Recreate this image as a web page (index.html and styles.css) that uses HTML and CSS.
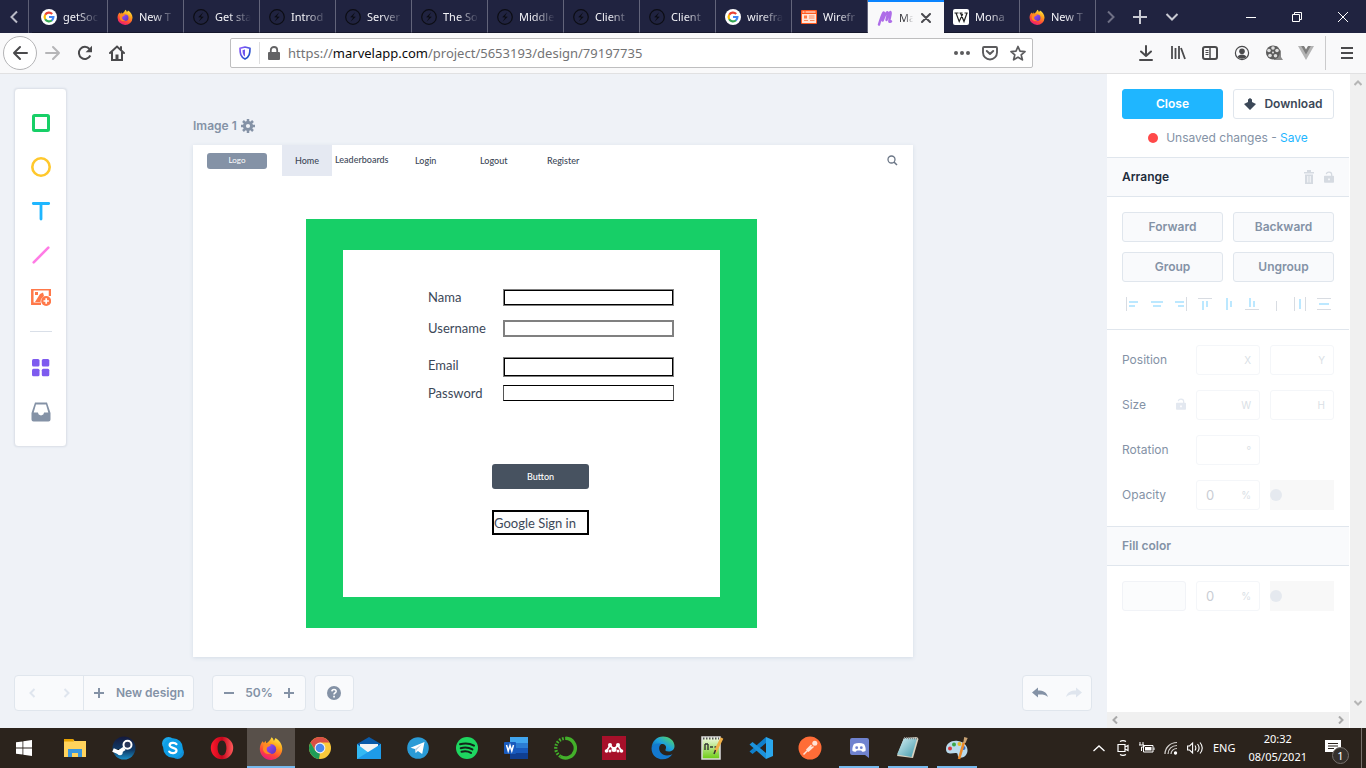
FILE: index.html
```html
<!DOCTYPE html>
<html lang="en">
<head>
<meta charset="utf-8">
<title>Marvel design editor</title>
<link rel="stylesheet" href="styles.css">
</head>
<body>
<svg class="sprite" aria-hidden="true">
  <defs>
    <linearGradient id="ff-body" x1="0.8" y1="0" x2="0.3" y2="1"><stop offset="0" stop-color="#fff04a"/><stop offset=".35" stop-color="#ffa31a"/><stop offset=".7" stop-color="#ff4a36"/><stop offset="1" stop-color="#e8177e"/></linearGradient>
    <linearGradient id="ff-core" x1="0" y1="0" x2="1" y2="1"><stop offset="0" stop-color="#9a4cff"/><stop offset="1" stop-color="#5a35b8"/></linearGradient>
    <linearGradient id="shield" x1="0" y1="0" x2="1" y2="1"><stop offset="0" stop-color="#9059ff"/><stop offset="1" stop-color="#0250bb"/></linearGradient>
    <linearGradient id="steam" x1="0" y1="0" x2="0" y2="1"><stop offset="0" stop-color="#14193d"/><stop offset=".6" stop-color="#103c68"/><stop offset="1" stop-color="#1a8fc8"/></linearGradient>
    <linearGradient id="opera" x1="0" y1="0" x2="1" y2="0"><stop offset="0" stop-color="#ff1b2d"/><stop offset=".5" stop-color="#c4051b"/><stop offset="1" stop-color="#ff5a5a"/></linearGradient>
    <linearGradient id="edge" x1="0" y1="1" x2="1" y2="0"><stop offset="0" stop-color="#0c59a4"/><stop offset=".5" stop-color="#1ba0df"/><stop offset="1" stop-color="#5fe04e"/></linearGradient>
    <linearGradient id="npp" x1="0" y1="0" x2="0" y2="1"><stop offset="0" stop-color="#f6fbe9"/><stop offset="1" stop-color="#6ccb12"/></linearGradient>
    <linearGradient id="note" x1="0" y1="0" x2="1" y2="1"><stop offset="0" stop-color="#d8f2f6"/><stop offset="1" stop-color="#3e97a8"/></linearGradient>
  </defs>
  <symbol id="i-google" viewBox="0 0 16 16"><circle cx="8" cy="8" r="8" fill="#fff"/><g fill="none" stroke-width="2.2"><path d="M4.2 5.8A4.4 4.4 0 0 1 11.2 5" stroke="#ea4335"/><path d="M4.2 10.2a4.5 4.5 0 0 1 0-4.4" stroke="#fbbc05"/><path d="M11 11.2A4.4 4.4 0 0 1 4.2 10.2" stroke="#34a853"/><path d="M8 8h4.4a4.4 4.4 0 0 1-1.5 3.3" stroke="#4285f4"/></g></symbol>
  <symbol id="i-firefox" viewBox="0 0 24 24"><path d="M12.5 1.2c1.5 1 2.1 2.2 2.4 3.7l1.6-2.8c3.8 2.4 6.8 6 6.8 11A11.2 11.2 0 0 1 12 24 11.2 11.2 0 0 1 .8 13C.8 9.800 2 7.400 3.500 5.200L5 7l1.500-2.200.8 2.500C9.500 6 11.500 4 12.500 1.200z" fill="url(#ff-body)"/><circle cx="12.300" cy="13.200" r="4.900" fill="url(#ff-core)"/><path d="M4.500 8.500c2.500-1.400 5-1 7.500.5-1.200 1.800-3.200 1-4.300 3.300-.6 2.700 1.800 5 4.800 4.800-3 2.200-7.600.6-8.600-3.300z" fill="#ff8a22"/></symbol>
  <symbol id="i-bolt" viewBox="0 0 16 16"><circle cx="8" cy="8" r="7.300" fill="none" stroke="#0c0d14" stroke-width="1.200"/><path d="M10.200 3.200 5.200 8.200l3 .3-2.700 4.300 5.300-5.100-3-.3z" fill="#0c0d14"/></symbol>
  <symbol id="i-wire" viewBox="0 0 16 16"><rect y="1" width="16" height="14" rx="1" fill="#ff5a1f"/><path d="M1 5h14v9H1z" fill="#ffe5d9"/><path d="M1.500 3h2m1 0h10" stroke="#fff"/><path d="M3 6.500h3v3H3z" fill="#ff7a45"/><path d="M8 7h5.500M8 9h5.500M3 11.500h4M9 11.500h4.500" stroke="#ff8a5c"/></symbol>
  <symbol id="i-marvel" viewBox="0 0 16 16"><path d="M2 14.500C3.500 10 5 4 6.500 2.500c1.300-.7.200 5-.8 8C7.500 6 9 2.500 10.300 2.200c1.300.3-.3 5-.8 7.800C11 6 12 2.500 13.500 2c1.200.6-1.400 7-1.200 9.500.2.800 1.200.3 1.700-.2" fill="none" stroke="#ae6de8" stroke-width="2.400" stroke-linecap="round" stroke-linejoin="round"/></symbol>
  <symbol id="i-wiki" viewBox="0 0 16 16"><rect width="16" height="16" rx="2" fill="#fff"/><path d="M1.500 4h4m1 0h3m2 0h3.200M3 4l3.200 8.500L9.700 5M7.500 4l3.500 8.500L14 4" fill="none" stroke="#222" stroke-width="1.200"/></symbol>
  <symbol id="i-unlock" viewBox="0 0 12 14"><path d="M1 5.500h10a1 1 0 0 1 1 1V13a1 1 0 0 1-1 1H1a1 1 0 0 1-1-1V6.500a1 1 0 0 1 1-1zm4 3.300v2h2v-2z" fill="currentColor" fill-rule="evenodd"/><path d="M2.800 3.500C3.300.2 9.200.2 9.200 4v2" fill="none" stroke="currentColor" stroke-width="1.500"/></symbol>
</svg>

<header class="tabs">
  <button class="tab-arrow" aria-label="Scroll tabs left"><svg width="8" height="14" viewBox="0 0 8 14"><path d="M7 1.500 1.500 7 7 12.500" fill="none" stroke="#b9bac6" stroke-width="2"/></svg></button>
  <nav class="tab-list">
    <a href="#" class="tab"><svg class="fav"><use href="#i-google"/></svg><span>getSoc</span></a>
    <a href="#" class="tab"><svg class="fav"><use href="#i-firefox"/></svg><span>New T</span></a>
    <a href="#" class="tab"><svg class="fav"><use href="#i-bolt"/></svg><span>Get sta</span></a>
    <a href="#" class="tab"><svg class="fav"><use href="#i-bolt"/></svg><span>Introd</span></a>
    <a href="#" class="tab"><svg class="fav"><use href="#i-bolt"/></svg><span>Server</span></a>
    <a href="#" class="tab"><svg class="fav"><use href="#i-bolt"/></svg><span>The So</span></a>
    <a href="#" class="tab"><svg class="fav"><use href="#i-bolt"/></svg><span>Middle</span></a>
    <a href="#" class="tab"><svg class="fav"><use href="#i-bolt"/></svg><span>Client</span></a>
    <a href="#" class="tab"><svg class="fav"><use href="#i-bolt"/></svg><span>Client</span></a>
    <a href="#" class="tab"><svg class="fav"><use href="#i-google"/></svg><span>wirefra</span></a>
    <a href="#" class="tab"><svg class="fav"><use href="#i-wire"/></svg><span>Wirefr</span></a>
    <a href="#" class="tab active"><svg class="fav"><use href="#i-marvel"/></svg><span>Ma</span><svg width="10" height="10" viewBox="0 0 10 10"><path d="m1 1 8 8m0-8L1 9" stroke="#4a4a4f" stroke-width="2" stroke-linecap="round"/></svg></a>
    <a href="#" class="tab"><svg class="fav"><use href="#i-wiki"/></svg><span>Mona</span></a>
    <a href="#" class="tab"><svg class="fav"><use href="#i-firefox"/></svg><span>New T</span></a>
  </nav>
  <div class="tab-tools">
    <button aria-label="Scroll tabs right"><svg width="8" height="14" viewBox="0 0 8 14"><path d="M1 1.500 6.500 7 1 12.500" fill="none" stroke="#6f7085" stroke-width="2"/></svg></button>
    <button aria-label="New tab"><svg width="14" height="14" viewBox="0 0 14 14"><path d="M7 0v14M0 7h14" stroke="#c9cad3" stroke-width="2"/></svg></button>
    <button aria-label="List tabs"><svg width="14" height="8" viewBox="0 0 14 8"><path d="m1.500 1 5.500 5.500L12.500 1" fill="none" stroke="#c9cad3" stroke-width="2"/></svg></button>
  </div>
  <div class="window-tools">
    <button aria-label="Minimize"><svg width="10" height="10" viewBox="0 0 10 10"><path d="M0 5.500h10" stroke="#fff"/></svg></button>
    <button aria-label="Restore"><svg width="10" height="10" viewBox="0 0 10 10"><path d="M.5 2.500h7v7h-7zM2.500 2.500v-2h7v7h-2" fill="none" stroke="#fff"/></svg></button>
    <button aria-label="Close window"><svg width="10" height="10" viewBox="0 0 10 10"><path d="m0 0 10 10m0-10L0 10" stroke="#fff"/></svg></button>
  </div>
</header>

<div class="toolbar">
  <button class="back" aria-label="Back"><svg width="16" height="16" viewBox="0 0 16 16"><path d="M15 8H2m6-6L2 8l6 6" fill="none" stroke="#4a4a4c" stroke-width="2" stroke-linecap="round" stroke-linejoin="round"/></svg></button>
  <button aria-label="Forward"><svg width="16" height="16" viewBox="0 0 16 16"><path d="M1 8h13M8 2l6 6-6 6" fill="none" stroke="#b5b5b7" stroke-width="2" stroke-linecap="round" stroke-linejoin="round"/></svg></button>
  <button aria-label="Reload"><svg width="16" height="16" viewBox="0 0 16 16"><path d="M13.300 10.500A6 6 0 1 1 12.500 4" fill="none" stroke="#4a4a4c" stroke-width="2"/><path d="M15 .8v6.400H8.600z" fill="#4a4a4c"/></svg></button>
  <button aria-label="Home"><svg width="16" height="16" viewBox="0 0 16 16"><path d="m1 8 7-6.500L15 8M3 7v8h10V7M12 2v3" fill="none" stroke="#4a4a4c" stroke-width="2" stroke-linecap="round"/><path d="M6.500 15V9.500h3V15z" fill="#4a4a4c"/></svg></button>
  <span class="stretch"></span>
  <div class="url">
    <svg width="12" height="14" viewBox="0 0 12 14"><path d="M6 1 11 2.300c0 5-.5 8.500-5 10.700C1.500 10.800 1 7.300 1 2.300z" fill="none" stroke="url(#shield)" stroke-width="1.700" stroke-linejoin="round"/><path d="M6 3.500v7C4 9.200 3.500 7 3.500 4.200z" fill="#6f56ee"/></svg>
    <span class="url-rule"></span>
    <svg width="12" height="14" viewBox="0 0 12 14"><rect y="6" width="12" height="8" rx="1" fill="#636365"/><path d="M2.800 7V4c0-4 6.400-4 6.400 0v3" fill="none" stroke="#636365" stroke-width="1.800"/></svg>
    <a class="address" href="#">https://<b>marvelapp.com</b>/project/5653193/design/79197735</a>
    <button aria-label="Page actions"><svg width="16" height="16" viewBox="0 0 16 16"><g fill="#5b5b5d"><circle cx="2" cy="8" r="2"/><circle cx="8" cy="8" r="2"/><circle cx="14" cy="8" r="2"/></g></svg></button>
    <button aria-label="Save to Pocket"><svg width="16" height="16" viewBox="0 0 16 16"><path d="M2 2h12a1 1 0 0 1 1 1v4.500a7 7 0 0 1-14 0V3a1 1 0 0 1 1-1z" fill="none" stroke="#5b5b5d" stroke-width="1.900"/><path d="M4.800 6 8 9l3.200-3" fill="none" stroke="#5b5b5d" stroke-width="2" stroke-linecap="round" stroke-linejoin="round"/></svg></button>
    <button aria-label="Bookmark"><svg width="16" height="16" viewBox="0 0 16 16"><path d="m8 1.500 2 4.600 5 .5-3.800 3.300 1.200 4.900L8 12.200l-4.400 2.600 1.200-4.900L1 6.600l5-.5z" fill="none" stroke="#5b5b5d" stroke-width="1.700" stroke-linejoin="round"/></svg></button>
  </div>
  <span class="stretch"></span>
  <button aria-label="Downloads"><svg width="16" height="16" viewBox="0 0 16 16"><path d="M8 1v10M3 6.500 8 11l5-4.500M2 15h12" fill="none" stroke="#4a4a4c" stroke-width="2" stroke-linecap="round" stroke-linejoin="round"/></svg></button>
  <button aria-label="Library"><svg width="16" height="16" viewBox="0 0 16 16"><path d="M2 1v13M5.500 3v11M9 1v13M11 3l4 11" stroke="#4a4a4c" stroke-width="1.800"/></svg></button>
  <button aria-label="Sidebars"><svg width="16" height="16" viewBox="0 0 16 16"><rect x="1" y="2" width="14" height="12" rx="2" fill="none" stroke="#4a4a4c" stroke-width="2"/><path d="M8 2v12" stroke="#4a4a4c" stroke-width="1.500"/><path d="M3.500 5.500h3m-3 2h3m-3 2h3" stroke="#4a4a4c"/></svg></button>
  <button aria-label="Account"><svg width="16" height="16" viewBox="0 0 16 16"><circle cx="8" cy="8" r="6.600" fill="none" stroke="#4a4a4c" stroke-width="1.200"/><circle cx="8" cy="6.300" r="2.800" fill="#4a4a4c"/><path d="M3.600 12c.7-3.500 8.100-3.500 8.800 0-2.600 2.300-6.200 2.300-8.800 0z" fill="#4a4a4c"/></svg></button>
  <button aria-label="Video extension"><svg width="18" height="16" viewBox="0 0 18 16"><path d="M9 1h3l4 5v6l2 3H9z" fill="#8a8a8a"/><circle cx="8" cy="7.500" r="7" fill="#5c5c5c"/><g fill="#dedede"><circle cx="8" cy="3" r="1.800"/><circle cx="4" cy="5.500" r="1.800"/><circle cx="12" cy="5.500" r="1.800"/><circle cx="5" cy="10.500" r="1.800"/><circle cx="10.500" cy="10.800" r="1.800"/><circle cx="8" cy="7.500" r="1"/></g></svg></button>
  <button aria-label="Vue devtools"><svg width="16" height="14" viewBox="0 0 16 14"><path d="M0 0h5.500L8 4.500 10.500 0H16L8 14z" fill="#b4b4b4"/><path d="M3.200 0H6l2 3.500L10 0h2.800L8 8.500z" fill="#7d7d7d"/></svg></button>
  <span class="menu-rule"></span>
  <button aria-label="Menu"><svg width="12" height="14" viewBox="0 0 12 14"><path d="M0 2h12M0 7h12M0 12h12" stroke="#4a4a4c" stroke-width="2"/></svg></button>
</div>

<main class="page">
  <section class="workspace">
    <div class="stage">
      <aside class="tools">
        <button aria-label="Rectangle"><svg width="20" height="20" viewBox="0 0 20 20"><rect x="2.500" y="2.500" width="15" height="15" rx="1" fill="none" stroke="#17cf67" stroke-width="3"/></svg></button>
        <button aria-label="Ellipse"><svg width="20" height="20" viewBox="0 0 20 20"><circle cx="10" cy="10" r="8.700" fill="none" stroke="#ffc82c" stroke-width="2.600"/></svg></button>
        <button aria-label="Text"><svg width="20" height="20" viewBox="0 0 20 20"><path d="M2.300 2.500h15.400M10 3v15" stroke="#1fb6ff" stroke-width="2.800" stroke-linecap="round"/></svg></button>
        <button aria-label="Line"><svg width="20" height="20" viewBox="0 0 20 20"><path d="M2.700 17.300 17.300 2.700" stroke="#ff7ce5" stroke-width="2.600" stroke-linecap="round"/></svg></button>
        <button aria-label="Image"><svg width="20" height="20" viewBox="0 2 20 20"><path d="M19 9V2.300H1.300v14.400H10" fill="none" stroke="#ff7849" stroke-width="2.500"/><path d="M4 15 9 7l3-1.500L13 9l-3 3-.5 3zM4 5h3v3H4z" fill="#ff7849"/><circle cx="15.200" cy="14" r="5" fill="#ff7849"/><path d="M15.200 11.300v5.400M12.500 14h5.400" stroke="#fff" stroke-width="1.700"/></svg></button>
        <hr>
        <button aria-label="Components"><svg width="20" height="20" viewBox="0 0 20 20"><g fill="#7e5bef"><rect x="1" y="1" width="7.500" height="7.500" rx="1.500"/><rect x="10.800" y="1" width="7.500" height="7.500" rx="1.500"/><rect x="1" y="10.700" width="7.500" height="7.500" rx="1.500"/><rect x="10.800" y="10.700" width="7.500" height="7.500" rx="1.500"/></g></svg></button>
        <button aria-label="Library inbox"><svg width="20" height="20" viewBox="0 0 20 20"><path d="M4 .5h12l3.500 10.500v6.500a2 2 0 0 1-2 2h-15a2 2 0 0 1-2-2V11zM5 2.500 2.700 10.500h4.200l.8 2 2.300 1 2.300-1 .8-2h4.200L15 2.500z" fill="#8492a6" fill-rule="evenodd"/></svg></button>
      </aside>

      <div class="board-wrap">
        <div class="board-title">Image 1
          <svg width="14" height="14" viewBox="0 0 14 14"><circle cx="7" cy="7" r="3.600" fill="none" stroke="#8492a6" stroke-width="3"/><path d="M7 0v3m0 8v3M0 7h3m8 0h3M2 2l2.200 2.200m5.600 5.600L12 12M12 2 9.800 4.200M4.200 9.800 2 12" stroke="#8492a6" stroke-width="2.500"/></svg>
        </div>
        <div class="board">
          <span class="node logo">Logo</span>
          <span class="node home">Home</span>
          <span class="node nav n-leader">Leaderboards</span>
          <span class="node nav n-login">Login</span>
          <span class="node nav n-logout">Logout</span>
          <span class="node nav n-register">Register</span>
          <svg class="node search" width="11" height="11" viewBox="0 0 11 11"><circle cx="4.500" cy="4.500" r="3.500" fill="none" stroke="#6b7686" stroke-width="1.300"/><path d="m7 7 3 3" stroke="#6b7686" stroke-width="1.500"/></svg>
          <div class="node frame"></div>
          <label class="node label l1" for="nama">Nama</label><input class="node box b1" id="nama">
          <label class="node label l2" for="user">Username</label><input class="node box b2" id="user">
          <label class="node label l3" for="mail">Email</label><input class="node box b3" id="mail">
          <label class="node label l4" for="pass">Password</label><input class="node box b4" id="pass" type="password">
          <button class="node submit">Button</button>
          <button class="node google">Google Sign in</button>
        </div>
      </div>
    </div>

    <div class="bottom">
      <div class="group">
        <button class="prev" aria-label="Previous"><svg width="7" height="10" viewBox="0 0 7 10"><path d="M5.500 1 1.500 5l4 4" fill="none" stroke="#dfe5ee" stroke-width="2"/></svg></button>
        <button class="prev" aria-label="Next"><svg width="7" height="10" viewBox="0 0 7 10"><path d="m1.500 1 4 4-4 4" fill="none" stroke="#dfe5ee" stroke-width="2"/></svg></button>
        <button class="new"><svg width="10" height="10" viewBox="0 0 10 10"><path d="M5 0v10M0 5h10" stroke="#8492a6" stroke-width="2"/></svg>New design</button>
      </div>
      <div class="group zoom">
        <button aria-label="Zoom out"><svg width="10" height="10" viewBox="0 0 10 10"><path d="M0 5h10" stroke="#8492a6" stroke-width="2"/></svg></button>
        <span>50%</span>
        <button aria-label="Zoom in"><svg width="10" height="10" viewBox="0 0 10 10"><path d="M5 0v10M0 5h10" stroke="#8492a6" stroke-width="2"/></svg></button>
      </div>
      <button class="group help" aria-label="Help"><svg width="14" height="14" viewBox="0 0 14 14"><circle cx="7" cy="7" r="7" fill="#8492a6"/><path d="M4.900 5.400c.1-2.600 4.300-2.500 4.200 0C9 6.900 7 6.800 7 8.500" fill="none" stroke="#fff" stroke-width="1.600"/><path d="M6.200 9.800h1.700v1.600H6.200z" fill="#fff"/></svg></button>
      <div class="group history">
        <button aria-label="Undo"><svg width="16" height="12" viewBox="0 0 16 12"><path d="M0 5.500 6 .5v3c5 0 9 1.500 9.800 6.500C13.500 7.500 10 7.200 6 7.500v3z" fill="#8492a6"/></svg></button>
        <button aria-label="Redo"><svg width="16" height="12" viewBox="0 0 16 12"><path d="M16 5.500 10 .5v3C5 3.500 1 5 .2 10 2.500 7.500 6 7.200 10 7.500v3z" fill="#dfe5ee"/></svg></button>
      </div>
    </div>
  </section>

  <aside class="side">
    <div class="panel">
      <div class="actions">
        <div class="pair">
          <button class="btn close">Close</button>
          <button class="btn download"><svg width="12" height="12" viewBox="0 0 12 12"><path d="M4 1.500 6 0l2 1.500V4l4 2-6 6-6-6 4-2z" fill="#3c4858"/></svg>Download</button>
        </div>
        <p class="status"><i></i><span>Unsaved changes - <a href="#">Save</a></span></p>
      </div>
      <h2 class="head"><span>Arrange</span>
        <svg class="pale" width="10" height="14" viewBox="0 0 10 14"><path d="M0 2h10v1.500H0zM3 0h4v2H3zM1 4.500h8V14H1z" fill="currentColor"/><path d="M3.800 6v6.500M6.200 6v6.500" stroke="#f9fafc"/></svg>
        <svg class="pale" width="10" height="14"><use href="#i-unlock"/></svg>
      </h2>
      <div class="arrange">
        <div class="pair">
          <button class="btn muted">Forward</button><button class="btn muted">Backward</button>
          <button class="btn muted">Group</button><button class="btn muted">Ungroup</button>
        </div>
        <div class="align">
          <svg viewBox="0 0 14 14"><path d="M.5 0v14" class="g"/><path d="M3 5h9M3 9h6" class="b"/></svg>
          <svg viewBox="0 0 14 14"><path d="M1 5h12M3 9h8" class="b"/></svg>
          <svg viewBox="0 0 14 14"><path d="M12.500 0v14" class="g"/><path d="M1 5h9M4 9h6" class="b"/></svg>
          <svg viewBox="0 0 14 14"><path d="M0 1.500h14" class="g"/><path d="M5 4v9M9 4v6" class="b"/></svg>
          <svg viewBox="0 0 14 14"><path d="M5 1v12M9 4v6" class="b"/></svg>
          <svg viewBox="0 0 14 14"><path d="M0 12.500h14" class="g"/><path d="M5 1v9M9 4v6" class="b"/></svg>
          <svg viewBox="0 0 14 14"><path d="M7.500 4v10" class="g"/></svg>
          <svg viewBox="0 0 14 14"><path d="M1.500 0v14M12.500 0v14" class="g"/><path d="M7 2v10" class="b"/></svg>
          <svg viewBox="0 0 14 14"><path d="M0 1.500h14M0 12.500h14" class="g"/><path d="M2 7h10" class="b"/></svg>
        </div>
      </div>
      <div class="props">
        <label for="px">Position</label><span class="field"><input id="px"><em>X</em></span><span class="field"><input aria-label="Position Y"><em>Y</em></span>
        <label for="sw" class="size">Size <svg width="10" height="14"><use href="#i-unlock"/></svg></label><span class="field"><input id="sw"><em>W</em></span><span class="field"><input aria-label="Height"><em>H</em></span>
        <label for="rot">Rotation</label><span class="field"><input id="rot"><em>°</em></span><span></span>
        <label for="op">Opacity</label><span class="field"><input id="op" value="0"><em>%</em></span><input type="range" value="0" aria-label="Opacity slider">
      </div>
      <h2 class="head soft"><span>Fill color</span></h2>
      <div class="props">
        <button class="swatch" aria-label="Fill color"></button><span class="field"><input value="0" aria-label="Fill opacity"><em>%</em></span><input type="range" value="0" aria-label="Fill slider">
      </div>
    </div>
    <div class="hscroll">
      <svg width="6" height="8" viewBox="0 0 6 8"><path d="M5 .5 1.500 4 5 7.500" fill="none" stroke="#a9a9a9" stroke-width="2"/></svg>
      <svg width="6" height="8" viewBox="0 0 6 8"><path d="M1 .5 4.500 4 1 7.500" fill="none" stroke="#a9a9a9" stroke-width="2"/></svg>
    </div>
  </aside>
  <div class="vscroll">
    <svg width="8" height="6" viewBox="0 0 8 6"><path d="M.5 5 4 1.500 7.500 5" fill="none" stroke="#b5b5b5" stroke-width="2"/></svg>
    <svg width="8" height="6" viewBox="0 0 8 6"><path d="M.5 1 4 4.500 7.500 1" fill="none" stroke="#b5b5b5" stroke-width="2"/></svg>
  </div>
</main>

<footer class="taskbar">
  <div class="apps">
    <button class="start" aria-label="Start"><svg width="16" height="16" viewBox="0 0 16 16"><path d="M0 2.300 6.500 1.400v6.200H0zM7.300 1.300 16 0v7.600H7.300zM0 8.400h6.500v6.200L0 13.700zM7.300 8.400H16V16l-8.700-1.300z" fill="#fff"/></svg></button>
    <button aria-label="File Explorer"><svg viewBox="0 0 24 24"><path d="M1 3h9l1.500 2H23v16H1z" fill="#ffd35c"/><path d="M1 3h9l1 2.500H1z" fill="#e8a200"/><path d="M5 21v-8h14v8h-4v-4H9v4z" fill="#3a97dd"/></svg></button>
    <button aria-label="Steam"><svg viewBox="0 0 24 24"><circle cx="12" cy="12" r="11.500" fill="url(#steam)"/><path d="m1 14 5.500 2.300 6-4" stroke="#fff" stroke-width="4"/><circle cx="15.500" cy="8.800" r="4" fill="#26365a" stroke="#fff" stroke-width="2"/><circle cx="8" cy="16.500" r="2.700" fill="#fff"/></svg></button>
    <button aria-label="Skype"><svg viewBox="0 0 24 24"><circle cx="7.500" cy="7.500" r="6.500" fill="#1ba7ea"/><circle cx="16.500" cy="16.500" r="6.500" fill="#1290d8"/><circle cx="12" cy="12" r="9.800" fill="#0e9ee6"/><path d="M15.500 8.200C14 6.300 8.500 6.300 8.600 9.300c.2 3.200 6.900 2 6.900 5.300 0 3-5.500 3.200-7.300 1" fill="none" stroke="#fff" stroke-width="2.200" stroke-linecap="round"/></svg></button>
    <button aria-label="Opera"><svg viewBox="0 0 24 24"><path d="M12 .8a11.200 11.200 0 1 0 0 22.400A11.200 11.200 0 0 0 12 .8zm0 3.700c2.800 0 4.400 3.500 4.400 7.500s-1.600 7.500-4.400 7.500S7.600 16 7.600 12 9.200 4.500 12 4.500z" fill="url(#opera)" fill-rule="evenodd"/></svg></button>
    <button class="current" aria-label="Firefox"><svg viewBox="0 0 24 24"><use href="#i-firefox"/></svg></button>
    <button aria-label="Chrome"><svg viewBox="0 0 24 24"><circle cx="12" cy="12" r="11" fill="#fbc93a"/><path d="M2.500 6.500a11 11 0 0 1 19 0H12L7 14.500z" fill="#da4f45"/><path d="M2.500 6.500 7.200 14.700 12 17.500 11 23A11 11 0 0 1 2.500 6.500z" fill="#1f9d58"/><circle cx="12" cy="12" r="5.400" fill="#f1f1f1"/><circle cx="12" cy="12" r="4.300" fill="#4a87ee"/></svg></button>
    <button aria-label="Mail"><svg viewBox="0 0 24 24"><path d="M0 8 12 1l12 7v3H0z" fill="#0a5aa8"/><path d="M3 8h18v8H3z" fill="#f4f4f4"/><path d="M0 8l12 9 12-9v15H0z" fill="#33b9f3"/><path d="M0 23 24 8v15z" fill="#1e9be8"/></svg></button>
    <button aria-label="Telegram"><svg viewBox="0 0 24 24"><circle cx="12" cy="12" r="10.800" fill="#2a9bd6"/><path d="M4.500 11.700 18.500 6l-2.300 12-4.300-3-2.200 2-.8-4z" fill="#fff"/><path d="m9 13 6.500-4.500-5 5.500-.6 3z" fill="#b5cfe0"/></svg></button>
    <button aria-label="Spotify"><svg viewBox="0 0 24 24"><circle cx="12" cy="12" r="11" fill="#1ed760"/><path d="M5 8.300c5-1.500 10-.9 14 1.300M5.700 12.200c4-1.200 8.300-.7 11.700 1.200M6.500 15.800c3.400-.9 6.600-.6 9.500 1.100" fill="none" stroke="#13251a" stroke-width="2" stroke-linecap="round"/></svg></button>
    <button aria-label="Word"><svg viewBox="0 0 24 24"><path d="M6 1h18v6H6z" fill="#41a5ee"/><path d="M6 7h18v5H6z" fill="#2b7cd3"/><path d="M6 12h18v5H6z" fill="#185abd"/><path d="M6 17h18v6H6z" fill="#103f91"/><rect y="6" width="12" height="12" rx="1" fill="#185abd"/><path d="m2.500 9 1.700 6L6 9.500 7.800 15l1.700-6" fill="none" stroke="#fff" stroke-width="1.500"/></svg></button>
    <button aria-label="Anaconda"><svg viewBox="0 0 24 24"><path d="M13 2.300a9.800 9.800 0 1 1-5.500 18.200" fill="none" stroke="#43b02a" stroke-width="3.400"/><path d="M7.500 20.500A9.800 9.800 0 0 1 13 2.300" fill="none" stroke="#43b02a" stroke-width="3.200" stroke-dasharray="1.700 1.400"/></svg></button>
    <button aria-label="Mendeley"><svg viewBox="0 0 24 24"><path d="M0 0h24v24H0z" fill="#a7102a"/><path d="M4.500 15 8 9.500l4 3.500 4-3.500 3.500 5.500" fill="none" stroke="#fff" stroke-width="1.800"/><g fill="#fff"><circle cx="4.500" cy="15" r="1.800"/><circle cx="19.500" cy="15" r="1.800"/><circle cx="8" cy="9" r="2"/><circle cx="16" cy="9" r="2"/><circle cx="12" cy="13.500" r="2.500"/><circle cx="8" cy="15" r="1.500"/><circle cx="16" cy="15" r="1.500"/></g></svg></button>
    <button aria-label="Edge"><svg viewBox="0 0 24 24"><path d="M.5 12C1 5 6 .5 12 .5c7 0 11.500 4.500 11.500 9.500 0 4-3 5.500-6 5.500-2.500 0-3.500-1-3-2 2-4-1.500-6-4.500-5.500C3.500 8.500.5 12 .5 12z" fill="url(#edge)"/><path d="M.5 12C2 8.500 6.500 6.500 10.500 8 6 10.500 8 19.500 16 19.500c2.500 0 4.500-1 5.500-1.500C16.500 26.500.5 25 .5 12z" fill="#1379cf"/></svg></button>
    <button aria-label="Notepad++"><svg viewBox="0 0 24 24"><path d="M2 1h18v22H2z" fill="url(#npp)" stroke="#ddd" stroke-width="1.500"/><path d="M3 2.500h16" stroke="#555" stroke-dasharray="1.500 1.500" stroke-width="2"/><path d="M5 8v6M8 8v6M5 8h3m2 3h3m1.500 0h3" stroke="#333" stroke-width="1.400"/><path d="m22 2-7 14" stroke="#f0b048" stroke-width="3"/><path d="m15.500 14-1.500 4" stroke="#333" stroke-width="1.500"/></svg></button>
    <button aria-label="VS Code"><svg viewBox="0 0 24 24"><path d="M17 1 24 4v16l-7 3z" fill="#2aa7ec"/><path d="M17 1v6L3.500 18 .5 15.500z" fill="#0f7fca"/><path d="M17 23v-6L3.500 6 .5 8.500z" fill="#1c92db"/></svg></button>
    <button aria-label="Postman"><svg viewBox="0 0 24 24"><circle cx="12" cy="12" r="11.500" fill="#ff6c37"/><path d="m5.500 18.500 8-8M10 15.500l5.500-5M8.500 14l5-5" stroke="#ffe1d6" stroke-width="1.500"/><circle cx="16.800" cy="7.300" r="2.500" fill="#ffe1d6"/></svg></button>
    <button class="open" aria-label="Discord"><svg viewBox="0 0 24 24"><path d="M5 2h15a2 2 0 0 1 2 2v18l-4-3H5a2 2 0 0 1-2-2V4a2 2 0 0 1 2-2z" fill="#7083cf"/><path d="M7 8c3-1.500 7-1.500 10 0 1.500 2.500 2 5 1.500 7-1.300.8-2.500 1-3.500.6l-.8-1.100H9.800L9 15.600c-1 .4-2.200.2-3.500-.6-.5-2 0-4.500 1.500-7z" fill="#fff"/><circle cx="9.700" cy="11.700" r="1.400" fill="#7083cf"/><circle cx="14.300" cy="11.700" r="1.400" fill="#7083cf"/></svg></button>
    <button class="open" aria-label="Notepad"><svg viewBox="0 0 24 24"><path d="m8 2 13-1 1.500 2-5.500 19L1 20z" fill="#d8d2c0"/><path d="m8 2 13 .5L15.500 21 1 18.500z" fill="url(#note)"/><path d="m8 2 13 .5" stroke="#888" stroke-width="2" stroke-dasharray="1 1"/></svg></button>
    <button class="open" aria-label="Paint"><svg viewBox="0 0 24 24"><path d="M1 13C1 7 7 4 13 5s10 5 9.500 10-5 7.500-8 6.500-.5-5-4-4.500S1 19 1 13z" fill="#b9daec"/><circle cx="5" cy="12.500" r="2" fill="#d8383c"/><circle cx="9" cy="8.500" r="2" fill="#3ba64a"/><circle cx="14.500" cy="8" r="2" fill="#e8b82c"/><circle cx="18.500" cy="12" r="2" fill="#3a70c8"/><path d="m14 23 5-17" stroke="#ec8a2a" stroke-width="2.600"/><path d="m18.200 7 1-6 3.500 1L20.500 7z" fill="#c9a273"/></svg></button>
  </div>
  <div class="tray">
    <button aria-label="Hidden icons"><svg width="12" height="7" viewBox="0 0 12 7"><path d="m.5 6 5.500-5 5.500 5" fill="none" stroke="#fff" stroke-width="1.300"/></svg></button>
    <button aria-label="Meet now"><svg width="12" height="16" viewBox="0 0 12 16"><path d="M1 4.500h7v7H1zM8 7l3-1.500v5L8 9M3 1.500C5 .3 7 .3 9 1.500M3 14.500c2 1.200 4 1.200 6 0" fill="none" stroke="#fff" stroke-width="1.200"/></svg></button>
    <button aria-label="Battery"><svg width="16" height="12" viewBox="0 0 16 12"><path d="M4.500 3.500h9.500v6.500H4.500zM15 5.500v2.500M1 0v3M4 0v3M0 3h5v2H2.500v4" fill="none" stroke="#fff"/><path d="M6 5h6.500v3.500H6z" fill="#fff"/></svg></button>
    <button aria-label="Network"><svg width="14" height="14" viewBox="0 0 14 14"><g fill="none" stroke="#d5d2cf" stroke-width="1.200"><path d="M1 13C1 7 6 1.500 13 1.500M4 13c0-5 4-8.500 9-8.500M7 13c0-3 2.500-5.500 6-5.500"/></g><circle cx="11.500" cy="12" r="1.700" fill="#fff"/></svg></button>
    <button aria-label="Volume"><svg width="16" height="14" viewBox="0 0 16 14"><path d="M.6 5h2l3-3v10l-3-3h-2zM8 4.500c1 1.500 1 3.500 0 5M10.500 3c2 2.500 2 5.500 0 8M13 1.500c2.700 3.300 2.700 7.700 0 11" fill="none" stroke="#fff" stroke-width="1.100"/></svg></button>
    <span class="lang">ENG</span>
    <span class="clock"><span>20:32</span><span>08/05/2021</span></span>
    <button class="notes" aria-label="Notifications"><svg width="16" height="16" viewBox="0 0 16 16"><path d="M0 0h16v12h-5l-3 3v-3H0z" fill="#fff"/><path d="M3 3.500h10M3 6h10M3 8.500h6" stroke="#2b231d"/></svg><span>1</span></button>
    <button class="desktop" aria-label="Show desktop"></button>
  </div>
</footer>
</body>
</html>
```
FILE: styles.css
```css
* { box-sizing: border-box; }
body {
  margin: 0;
  min-height: 100vh;
  display: flex;
  flex-direction: column;
  font-family: Inter, "Liberation Sans", sans-serif;
  font-size: 12px;
  line-height: 16px;
  color: #8492a6;
}
button { border: 0; margin: 0; padding: 0; background: none; font: inherit; color: inherit; display: flex; align-items: center; justify-content: center; }
a { color: inherit; text-decoration: none; }
svg { display: block; flex: none; }
.sprite { position: absolute; width: 0; height: 0; }

/* browser tabs */
.tabs { display: flex; height: 33px; background: #202340; font-family: "Noto Sans", sans-serif; font-size: 11px; color: #f4f4f8; }
.tab-arrow { width: 29px; border-right: 1px solid #5d5f75; }
.tab-list { display: flex; padding-left: 3px; }
.tab { width: 76px; display: flex; align-items: center; gap: 6px; padding: 1px 4px 0 9px; border-right: 1px solid #62647a; border-bottom: 1px solid #15172c; }
.tab span { flex: 1; white-space: nowrap; mask-image: linear-gradient(to right, #000 35%, transparent 90%); }
.fav { width: 16px; height: 16px; }
.tab.active { background: #f9f9fa; color: #38383d; border-top: 2px solid #0a84ff; border-bottom: 0; border-right: 0; padding: 0 13px 0 9px; }
.tab-tools { display: flex; }
.tab-tools button { width: 30px; }
.tab-tools button:first-child { width: 29px; }
.tab-tools button:last-child { width: 34px; }
.window-tools { display: flex; margin-left: auto; }
.window-tools button { width: 46px; }

/* browser toolbar */
.toolbar { display: flex; align-items: center; height: 41px; padding: 0 3px; background: #f9f9fa; border-bottom: 1px solid #e1e1e2; font-family: "Noto Sans", sans-serif; }
.toolbar > button { width: 32px; height: 32px; }
.toolbar > .back { width: 34px; height: 34px; border: 1px solid #b4b4b6; border-radius: 50%; background: #fff; }
.stretch { width: 97px; }
.url { flex: 1; height: 30px; display: flex; align-items: center; border: 1px solid #bebebf; border-radius: 2px; background: #fff; color: #737375; font-size: 13px; padding-left: 8px; }
.url-rule { width: 1px; height: 22px; background: #dededf; margin: 0 8px; }
.address { flex: 1; padding-left: 8px; }
.address b { font-weight: 400; color: #0c0c0d; }
.url button { width: 28px; height: 28px; }
.menu-rule { width: 1px; height: 34px; background: #cbcbcc; margin: 0 5px 0 3px; }

/* editor */
.page { flex: 1; display: flex; }
.workspace { flex: 1; display: flex; flex-direction: column; background: #eff2f7; padding: 14px 15px 17px 14px; }
.stage { flex: 1; display: grid; grid-template-columns: 1fr auto 1fr; align-items: start; padding-bottom: 18px; }
.tools { justify-self: start; width: 53px; padding: 12px 0; background: #fff; border: 1px solid #dfe3ea; border-radius: 4px; box-shadow: 0 0 2px #d6dce6; }
.tools button { width: 100%; height: 44px; }
.tools hr { width: 22px; height: 1px; border: 0; margin: 10px auto 14px; background: #d9dfe8; }
.board-title { display: flex; align-items: center; gap: 4px; padding: 30px 0 11px; font-weight: 600; }
.board { position: relative; width: 720px; aspect-ratio: 720 / 512; background: #fff; box-shadow: 0 1px 4px #d3dce6; font-family: Lato, sans-serif; color: #3c4858; }

/* shapes placed freely on the artboard */
.node { position: absolute; }
.logo { left: 14px; top: 8px; width: 60px; height: 16px; line-height: 15px; border-radius: 3px; background: #8492a6; color: #fff; font-size: 8px; text-align: center; }
.home { left: 89px; top: 0; width: 50px; height: 31px; line-height: 32px; background: #e5e9f2; text-align: center; font-size: 9px; font-weight: 500; }
.nav { top: 8px; font-size: 9px; font-weight: 500; }
.n-leader { left: 142px; top: 7px; }
.n-login { left: 222px; }
.n-logout { left: 287px; }
.n-register { left: 354px; }
.search { left: 694px; top: 10px; }
.frame { left: 113px; top: 74px; width: 451px; height: 409px; border: solid #17cf67; border-width: 31px 37px; }
.label { left: 235px; font-size: 13px; line-height: 18px; }
.l1 { top: 143px; }
.l2 { top: 174px; }
.l3 { top: 211px; }
.l4 { top: 239px; }
.box { left: 310px; width: 171px; height: 17px; padding: 0 4px; border: 1px solid #808080; box-shadow: inset 0 0 0 1px #000; background: #fff; }
.b1 { top: 144px; }
.b2 { top: 175px; box-shadow: inset 0 0 0 1px #808080; }
.b3 { top: 212px; height: 20px; }
.b4 { top: 240px; height: 16px; border-color: #000 #555; box-shadow: none; }
.submit { left: 299px; top: 319px; width: 97px; height: 25px; border-radius: 3px; background: #475260; color: #fff; font-size: 9px; font-weight: 500; }
.google { left: 299px; top: 365px; width: 97px; height: 25px; border: 2px solid #000; background: #fcfcfc; font-size: 13px; justify-content: flex-start; white-space: nowrap; }

/* bottom controls */
.bottom { display: flex; }
.group { display: flex; height: 36px; background: #f9fafc; border: 1px solid #e0e6ed; border-radius: 4px; font-weight: 600; }
.prev { width: 34px; }
.new { gap: 12px; padding: 0 9px 0 10px; border-left: 1px solid #e0e6ed; }
.zoom { margin: 0 8px 0 18px; align-items: center; }
.zoom button { width: 32px; height: 34px; }
.help { width: 40px; }
.history { margin-left: auto; }
.history button { width: 34px; }

/* properties panel */
.side { width: 243px; display: flex; flex-direction: column; background: #fff; border-right: 1px solid #fff; }
.panel { flex: 1; }
.actions { padding: 15px 15px 11px; border-bottom: 1px solid #e0e6ed; }
.pair { display: grid; grid-template-columns: 1fr 1fr; gap: 10px; }
.btn { height: 30px; border: 1px solid #e0e6ed; border-radius: 3px; font-weight: 600; }
.close { background: #1fb6ff; border-color: #1fb6ff; color: #fff; }
.download { gap: 8px; color: #3c4858; }
.muted { background: #f9fafc; }
.status { display: flex; align-items: center; justify-content: center; gap: 8px; margin: 11px 0 0; }
.status i { width: 10px; height: 10px; border-radius: 50%; background: #ff4949; }
.status a { color: #1fb6ff; }
.head { display: flex; align-items: center; gap: 10px; height: 39px; margin: 0; padding: 0 15px; background: #f9fafc; border-bottom: 1px solid #e0e6ed; font-size: 12px; font-weight: 600; color: #1f2d3d; }
.head span { flex: 1; }
.soft { color: #8492a6; border-top: 1px solid #e0e6ed; height: 40px; }
.pale { color: #d5dae1; }
.arrange { padding: 15px 15px 18px; border-bottom: 1px solid #e0e6ed; }
.align { display: flex; justify-content: space-between; padding: 15px 3px 0 4px; }
.align svg { width: 14px; height: 14px; }
.g { stroke: #d8dce2; fill: none; }
.b { stroke: #bce8ff; stroke-width: 2; fill: none; }
.props { display: grid; grid-template-columns: 1fr 1fr 1fr; gap: 15px 10px; align-items: center; padding: 15px 15px 16px; }
.size { display: flex; justify-content: space-between; }
.size svg { color: #e3e8f0; }
.field { display: flex; align-items: center; height: 30px; padding: 0 8px; border: 1px solid #f4f6f9; border-radius: 3px; }
.field input { flex: 1; width: 0; border: 0; padding: 0; margin: 0 0 0 1px; background: none; font: inherit; font-size: 13px; color: #c9cdd4; }
.field em { font-style: normal; font-size: 10px; color: #dadfe6; }
input[type=range] { appearance: none; width: 100%; height: 30px; margin: 0; background: #f8f8f8; }
input[type=range]::-webkit-slider-thumb { appearance: none; width: 12px; height: 12px; border-radius: 50%; background: #e5e9ef; }
.swatch { height: 30px; background: #fbfcfd; border: 1px solid #f1f3f7; border-radius: 3px; }
.hscroll { height: 16px; display: flex; align-items: center; justify-content: space-between; padding: 0 5px; background: #f0f0f0; }
.vscroll { width: 16px; display: flex; flex-direction: column; align-items: center; justify-content: space-between; padding: 6px 0 22px; background: #f0f0f0; }

/* taskbar */
.taskbar { display: flex; height: 40px; background: #2b231c; color: #fff; font-family: "Noto Sans", sans-serif; }
.apps { display: flex; gap: 1px; }
.apps button { width: 48px; }
.apps button:not(.start) svg { width: 24px; height: 24px; }
.apps .start { margin-right: 2px; }
.apps .current { background: #58504a; border-bottom: 2px solid #76b9ed; padding-top: 2px; }
.apps .open { width: 40px; margin: 0 4px; border-bottom: 2px solid #76b9ed; padding-top: 2px; }
.tray { display: flex; align-items: center; margin-left: auto; }
.tray button { width: 24px; height: 40px; }
.lang { padding: 0 13px 0 6px; font-size: 11px; }
.clock { display: flex; flex-direction: column; align-items: center; gap: 2px; font-size: 11px; }
.tray .notes { position: relative; width: 16px; margin-left: 18px; }
.notes span { position: absolute; left: 7px; top: 19px; width: 17px; height: 17px; border: 1px solid #77716d; border-radius: 50%; background: #35302c; font-size: 11px; line-height: 15px; text-align: center; }
.tray .desktop { width: 5px; margin-left: 20px; border-left: 1px solid #77716d; }
```
